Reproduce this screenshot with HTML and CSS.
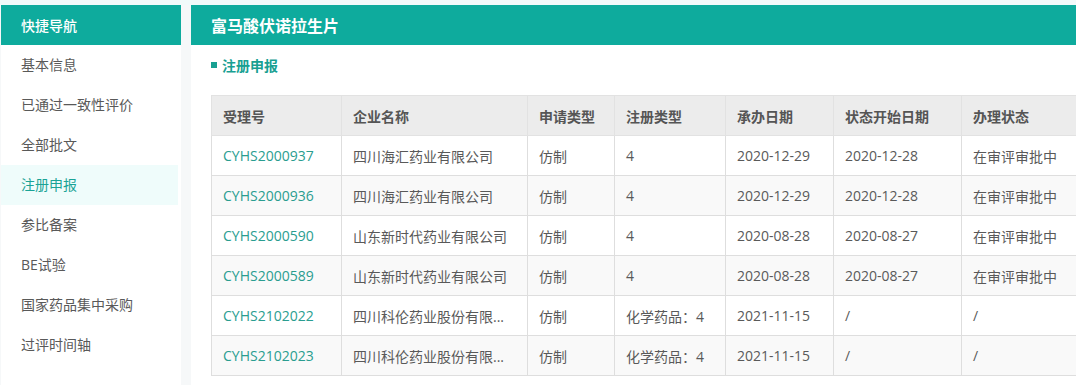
FILE: index.html
```html
<!DOCTYPE html>
<html lang="zh-CN">
<head>
    <meta charset="UTF-8">
    <meta name="viewport" content="width=device-width, initial-scale=1.0">
    <title>富马酸伏诺拉生片</title>
    <link rel="stylesheet" href="styles.css">
</head>
<body>
    <div class="page">
        <div class="sidebar">
            <div class="side-title">快捷导航</div>
            <ul class="side-nav">
                <li>基本信息</li>
                <li>已通过一致性评价</li>
                <li>全部批文</li>
                <li class="active">注册申报</li>
                <li>参比备案</li>
                <li>BE试验</li>
                <li>国家药品集中采购</li>
                <li>过评时间轴</li>
            </ul>
        </div>

        <div class="main">
            <div class="main-title">富马酸伏诺拉生片</div>
            <div class="content">
                <div class="section-title"><span class="dot"></span>注册申报</div>
                <table class="reg-table">
                    <colgroup>
                        <col style="width:130px">
                        <col style="width:186px">
                        <col style="width:87px">
                        <col style="width:111px">
                        <col style="width:108px">
                        <col style="width:128px">
                        <col style="width:139px">
                    </colgroup>
                    <thead>
                        <tr>
                            <th>受理号</th>
                            <th>企业名称</th>
                            <th>申请类型</th>
                            <th>注册类型</th>
                            <th>承办日期</th>
                            <th>状态开始日期</th>
                            <th>办理状态</th>
                        </tr>
                    </thead>
                    <tbody>
                        <tr>
                            <td class="code">CYHS2000937</td>
                            <td>四川海汇药业有限公司</td>
                            <td>仿制</td>
                            <td>4</td>
                            <td>2020-12-29</td>
                            <td>2020-12-28</td>
                            <td>在审评审批中</td>
                        </tr>
                        <tr>
                            <td class="code">CYHS2000936</td>
                            <td>四川海汇药业有限公司</td>
                            <td>仿制</td>
                            <td>4</td>
                            <td>2020-12-29</td>
                            <td>2020-12-28</td>
                            <td>在审评审批中</td>
                        </tr>
                        <tr>
                            <td class="code">CYHS2000590</td>
                            <td>山东新时代药业有限公司</td>
                            <td>仿制</td>
                            <td>4</td>
                            <td>2020-08-28</td>
                            <td>2020-08-27</td>
                            <td>在审评审批中</td>
                        </tr>
                        <tr>
                            <td class="code">CYHS2000589</td>
                            <td>山东新时代药业有限公司</td>
                            <td>仿制</td>
                            <td>4</td>
                            <td>2020-08-28</td>
                            <td>2020-08-27</td>
                            <td>在审评审批中</td>
                        </tr>
                        <tr>
                            <td class="code">CYHS2102022</td>
                            <td>四川科伦药业股份有限...</td>
                            <td>仿制</td>
                            <td>化学药品：4</td>
                            <td>2021-11-15</td>
                            <td>/</td>
                            <td>/</td>
                        </tr>
                        <tr>
                            <td class="code">CYHS2102023</td>
                            <td>四川科伦药业股份有限...</td>
                            <td>仿制</td>
                            <td>化学药品：4</td>
                            <td>2021-11-15</td>
                            <td>/</td>
                            <td>/</td>
                        </tr>
                    </tbody>
                </table>
            </div>
        </div>
    </div>
</body>
</html>
```

FILE: styles.css
```css
html, body {
    height: 100%;
}

body {
    margin: 0;
    font-family: 'Open Sans', 'Noto Sans CJK SC', sans-serif;
    font-size: 14px;
    color: #595959;
    background-color: #f6f8f9;
    border-top: 5px solid #f1fafa;
    box-sizing: border-box;
}

.page {
    display: flex;
    gap: 10px;
    height: 100%;
    padding-left: 1px;
}

/* sidebar */
.sidebar {
    width: 180px;
    flex-shrink: 0;
    background-color: #fff;
}

.side-title {
    height: 40px;
    line-height: 40px;
    padding-left: 20px;
    background-color: #0eab9d;
    color: #fff;
    font-family: 'Noto Sans CJK SC', sans-serif;
    font-size: 14px;
    font-weight: 500;
}

.side-nav {
    list-style: none;
    margin: 0;
    padding: 0;
}

.side-nav li {
    height: 40px;
    line-height: 40px;
    padding-left: 20px;
    margin-right: 3px;
    color: #595959;
}

.side-nav li.active {
    background-color: #effcfb;
    color: #1aa396;
}

/* main panel */
.main {
    flex: 1;
    min-width: 0;
    background-color: #fff;
    overflow: hidden;
}

.main-title {
    height: 40px;
    line-height: 40px;
    padding-left: 20px;
    background-color: #0eab9d;
    color: #fff;
    font-family: 'Noto Sans CJK SC', sans-serif;
    font-size: 16px;
    font-weight: bold;
}

.content {
    padding-left: 20px;
}

.section-title {
    display: flex;
    align-items: center;
    height: 40px;
    color: #18a092;
    font-weight: bold;
    font-size: 14px;
}

.section-title .dot {
    width: 6px;
    height: 6px;
    background-color: #18a092;
    margin-right: 5px;
}

.reg-table {
    margin-top: 10px;
    width: 889px;
    border-collapse: collapse;
    table-layout: fixed;
}

.reg-table th,
.reg-table td {
    height: 39px;
    padding: 0 11px;
    text-align: left;
    border: 1px solid #dedede;
    white-space: nowrap;
    overflow: hidden;
}

.reg-table th {
    background-color: #ececec;
    color: #555;
    font-weight: bold;
    border-color: #e2e2e2;
}

.reg-table tbody tr:nth-child(even) {
    background-color: #f9f9f9;
}

.reg-table td.code {
    color: #2a9d90;
}
```
